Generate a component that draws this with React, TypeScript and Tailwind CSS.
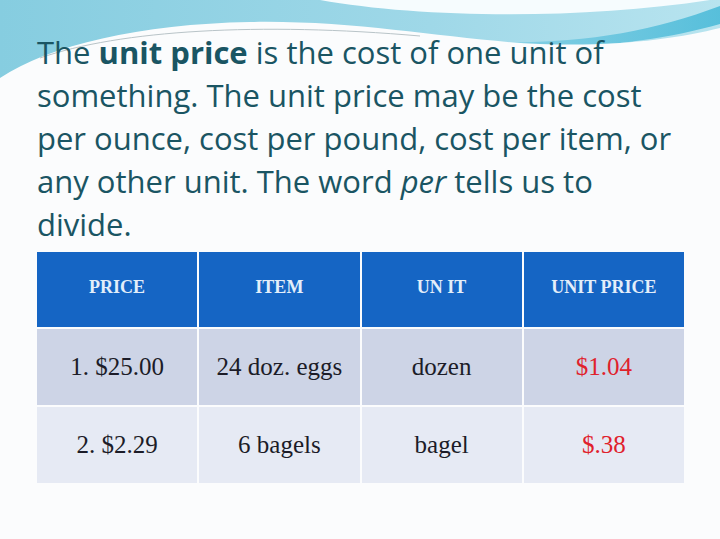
import React from 'react';

const rows = [
  { price: '1. $25.00', item: '24 doz. eggs', unit: 'dozen', unitPrice: '$1.04', bg: 'bg-[#cdd4e6]' },
  { price: '2. $2.29', item: '6 bagels', unit: 'bagel', unitPrice: '$.38', bg: 'bg-[#e6eaf4]' },
];

const headers = ['PRICE', 'ITEM', 'UN IT', 'UNIT PRICE'];

function Wave() {
  return (
    <svg className="absolute inset-x-0 top-0" width="720" height="100" viewBox="0 0 720 100">
      <defs>
        <linearGradient id="sky" x1="0" y1="0" x2="1" y2="0">
          <stop offset="0" stopColor="#86cde0" />
          <stop offset="0.6" stopColor="#9fd8e8" />
          <stop offset="1" stopColor="#b8e4ef" />
        </linearGradient>
        <linearGradient id="band" x1="0" y1="0" x2="1" y2="0">
          <stop offset="0" stopColor="#8fd3e6" />
          <stop offset="1" stopColor="#3fb6d6" />
        </linearGradient>
      </defs>
      <rect width="720" height="100" fill="url(#sky)" />
      <path d="M320,0 C420,18 580,20 710,0 Z" fill="#f6fcfe" />
      <path d="M440,40 C560,48 640,36 720,6 L720,24 C650,44 560,54 440,40 Z" fill="url(#band)" opacity="0.8" />
      <path d="M0,78 C50,45 140,24 250,22 C360,20 450,40 540,44 C620,47 680,38 720,28 L720,100 L0,100 Z" fill="#fbfcfd" />
      <path d="M40,58 C120,30 260,22 420,36" stroke="#b9c4c8" strokeWidth="1" fill="none" />
    </svg>
  );
}

export default function App() {
  return (
    <div className="relative h-[539px] w-[720px] overflow-hidden bg-[#fbfcfd]">
      <Wave />
      <div className="relative flex flex-col px-[37px] pt-[31px]">
        <p className="text-[31px] leading-[43px] tracking-[0px] text-[#1a5563] [font-family:'Open_Sans',sans-serif]">
          <span className="block whitespace-nowrap">
            The <b className="font-bold">unit price</b> is the cost of one unit of
          </span>
          <span className="block whitespace-nowrap">something. The unit price may be the cost</span>
          <span className="block whitespace-nowrap">per ounce, cost per pound, cost per item, or</span>
          <span className="block whitespace-nowrap">
            any other unit. The word <i>per</i> tells us to
          </span>
          <span className="block whitespace-nowrap">divide.</span>
        </p>

        <div className="mt-[6px] grid w-[647px] grid-cols-4 gap-[2px] [font-family:'Liberation_Serif',serif]">
          {headers.map((h) => (
            <div
              key={h}
              className="flex h-[75px] items-center justify-center pb-[4px] bg-[#1565c4] text-[18px] font-bold text-[#e3eefa]"
            >
              {h}
            </div>
          ))}
          {rows.map((r) => (
            <React.Fragment key={r.price}>
              <div className={`flex h-[76px] items-center justify-center text-[25px] text-[#1c1c28] ${r.bg}`}>{r.price}</div>
              <div className={`flex h-[76px] items-center justify-center text-[25px] text-[#1c1c28] ${r.bg}`}>{r.item}</div>
              <div className={`flex h-[76px] items-center justify-center text-[25px] text-[#1c1c28] ${r.bg}`}>{r.unit}</div>
              <div className={`flex h-[76px] items-center justify-center text-[25px] text-[#e0212c] ${r.bg}`}>{r.unitPrice}</div>
            </React.Fragment>
          ))}
        </div>
      </div>
    </div>
  );
}
